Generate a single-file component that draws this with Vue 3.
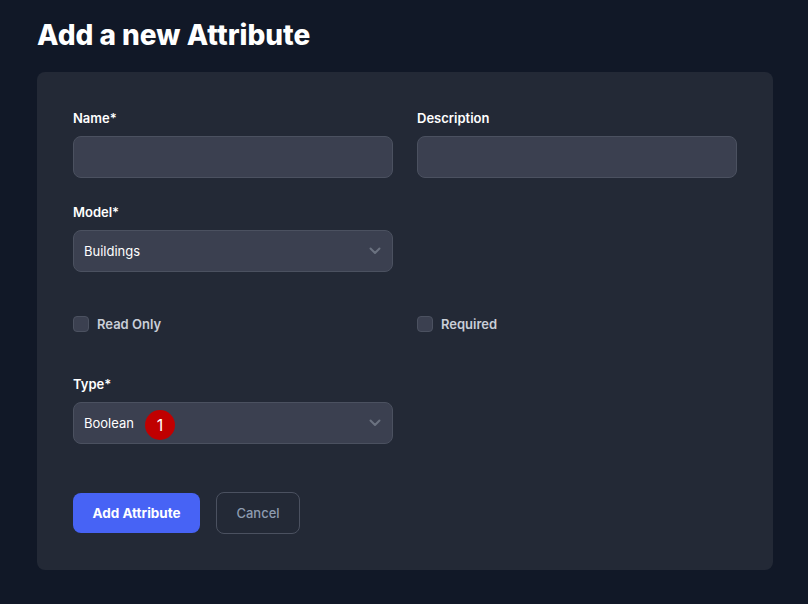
<script setup>
import { ref } from "vue";

const name = ref("");
const description = ref("");
const model = ref("Buildings");
const type = ref("Boolean");
const readOnly = ref(false);
const required = ref(false);
</script>

<template>
  <div class="page">
    <h1 class="title">Add a new Attribute</h1>
    <form class="card" @submit.prevent>
      <div class="row">
        <div class="field">
          <label class="label">Name*</label>
          <input v-model="name" class="control" type="text" />
        </div>
        <div class="field">
          <label class="label">Description</label>
          <input v-model="description" class="control" type="text" />
        </div>
      </div>

      <div class="row model-row">
        <div class="field">
          <label class="label">Model*</label>
          <div class="select">
            <span>{{ model }}</span>
            <svg class="chevron" width="20" height="20" viewBox="0 0 20 20" fill="none">
              <path d="M5.5 7.5 10 12l4.5-4.5" stroke="#6b7280" stroke-width="2" stroke-linecap="round" stroke-linejoin="round" />
            </svg>
          </div>
        </div>
      </div>

      <div class="row check-row">
        <label class="check">
          <input v-model="readOnly" class="box" type="checkbox" />
          <span>Read Only</span>
        </label>
        <label class="check">
          <input v-model="required" class="box" type="checkbox" />
          <span>Required</span>
        </label>
      </div>

      <div class="row type-row">
        <div class="field">
          <label class="label">Type*</label>
          <div class="select">
            <span>{{ type }}</span>
            <span class="badge">1</span>
            <svg class="chevron" width="20" height="20" viewBox="0 0 20 20" fill="none">
              <path d="M5.5 7.5 10 12l4.5-4.5" stroke="#6b7280" stroke-width="2" stroke-linecap="round" stroke-linejoin="round" />
            </svg>
          </div>
        </div>
      </div>

      <div class="actions">
        <button class="btn primary" type="submit">Add Attribute</button>
        <button class="btn ghost" type="button">Cancel</button>
      </div>
    </form>
  </div>
</template>

<style>
body {
  background: #111827;
}
</style>

<style scoped>
.page {
  box-sizing: border-box;
  width: 808px;
  height: 604px;
  padding: 0 35px 0 37px;
  overflow: hidden;
  background: #111827;
  font-family: Inter, "Liberation Sans", sans-serif;
}

.title {
  margin: 0;
  height: 72px;
  padding-top: 17px;
  box-sizing: border-box;
  font-size: 28px;
  line-height: 36px;
  font-weight: 800;
  color: #fff;
}

.card {
  box-sizing: border-box;
  height: 498px;
  padding: 36px;
  border-radius: 8px;
  background: #232936;
}

.row {
  display: grid;
  grid-template-columns: 320px 320px;
  column-gap: 24px;
}

.model-row {
  margin-top: 24px;
}

.check-row {
  margin-top: 42px;
}

.type-row {
  margin-top: 40px;
}

.label {
  display: block;
  height: 20px;
  margin-bottom: 8px;
  font-size: 13px;
  line-height: 20px;
  font-weight: 600;
  color: #fff;
}

.control,
.select {
  box-sizing: border-box;
  width: 320px;
  height: 42px;
  border: 1px solid #4b5160;
  border-radius: 8px;
  background: #3b4050;
  color: #fff;
  font-family: inherit;
  font-size: 13px;
  outline: none;
}

.select {
  position: relative;
  display: flex;
  align-items: center;
  padding: 0 10px;
}

.chevron {
  position: absolute;
  right: 7px;
  top: 10px;
}

.badge {
  position: absolute;
  left: 71px;
  top: 7px;
  width: 30px;
  height: 30px;
  border-radius: 50%;
  background: #c00000;
  color: #fff;
  font-size: 16px;
  line-height: 30px;
  text-align: center;
}

.check {
  display: flex;
  align-items: center;
  gap: 8px;
  height: 20px;
  font-size: 13px;
  font-weight: 600;
  color: #c9ced8;
}

.box {
  appearance: none;
  box-sizing: border-box;
  width: 16px;
  height: 16px;
  margin: 0;
  border: 1px solid #4b5160;
  border-radius: 4px;
  background: #3b4050;
}

.actions {
  display: flex;
  align-items: center;
  gap: 16px;
  margin-top: 48px;
}

.btn {
  box-sizing: border-box;
  font-family: inherit;
  font-size: 13px;
  border-radius: 8px;
}

.primary {
  width: 127px;
  height: 40px;
  border: none;
  background: #4763f5;
  color: #fff;
  font-size: 13.5px;
  font-weight: 700;
}

.ghost {
  width: 84px;
  height: 42px;
  border: 1px solid #4b5160;
  background: transparent;
  color: #8e9bb0;
  font-weight: 500;
}
</style>
